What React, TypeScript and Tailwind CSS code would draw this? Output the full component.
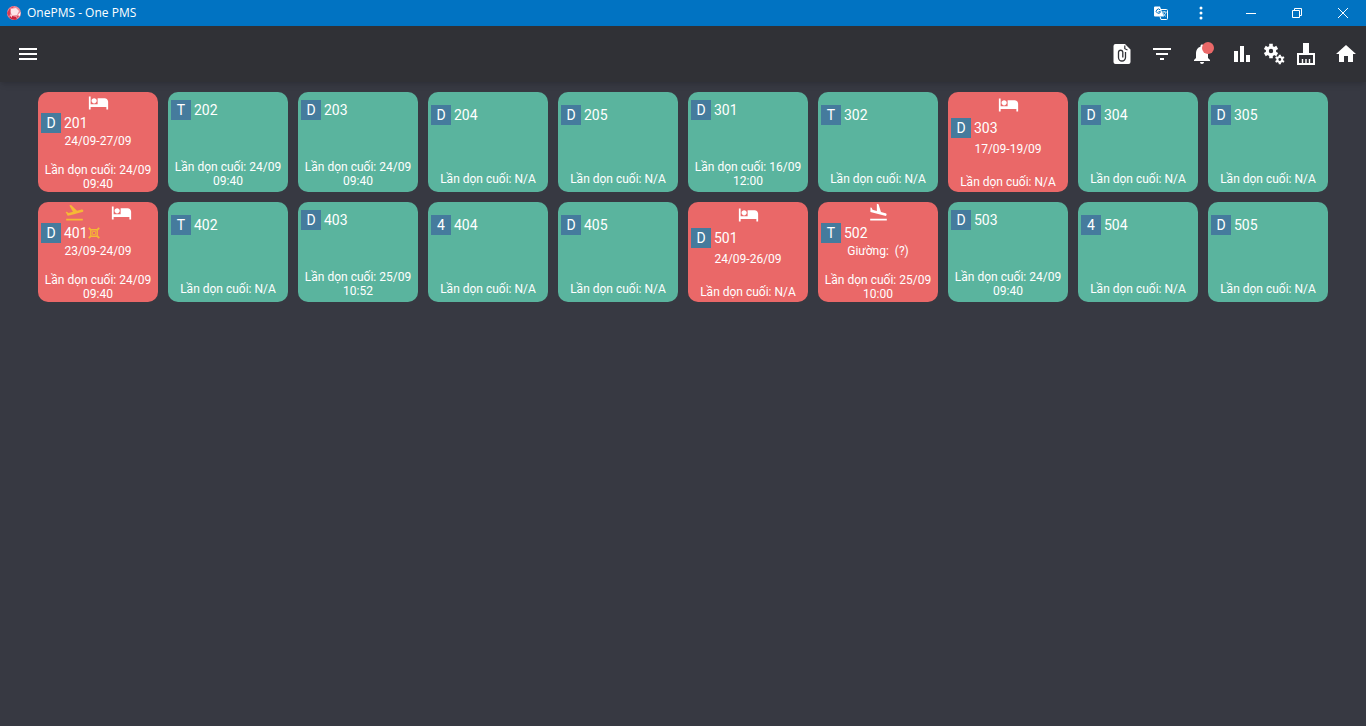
import type { ReactNode } from 'react';
import { MdFilterList, MdFlightLand, MdFlightTakeoff, MdHome, MdHotel, MdMenu, MdNotifications } from 'react-icons/md';

type Status = 'arrival' | 'departure' | 'occupied';

type Room = {
  name: string;
  type: string;
  cleaned?: string;
  status?: Status[];
  note?: string;
  flagged?: boolean;
};

const rooms: Room[] = [
  { name: '201', type: 'D', cleaned: '24/09 09:40', status: ['occupied'], note: '24/09-27/09' },
  { name: '202', type: 'T', cleaned: '24/09 09:40' },
  { name: '203', type: 'D', cleaned: '24/09 09:40' },
  { name: '204', type: 'D' },
  { name: '205', type: 'D' },
  { name: '301', type: 'D', cleaned: '16/09 12:00' },
  { name: '302', type: 'T' },
  { name: '303', type: 'D', status: ['occupied'], note: '17/09-19/09' },
  { name: '304', type: 'D' },
  { name: '305', type: 'D' },
  { name: '401', type: 'D', cleaned: '24/09 09:40', status: ['departure', 'occupied'], note: '23/09-24/09', flagged: true },
  { name: '402', type: 'T' },
  { name: '403', type: 'D', cleaned: '25/09 10:52' },
  { name: '404', type: '4' },
  { name: '405', type: 'D' },
  { name: '501', type: 'D', status: ['occupied'], note: '24/09-26/09' },
  { name: '502', type: 'T', cleaned: '25/09 10:00', status: ['arrival'], note: 'Giường:\u00a0 (?)' },
  { name: '503', type: 'D', cleaned: '24/09 09:40' },
  { name: '504', type: '4' },
  { name: '505', type: 'D' },
];

function Logo() {
  return (
    <svg viewBox="0 0 14 14" className="size-[14px]">
      <circle cx="7" cy="7" r="7" fill="#ee8b9a" />
      <path d="M0 7 L3 2 L4 6 L2 11Z" fill="#d93a52" />
      <path d="M2 11 L5 10 L9 11 L10 13.3 A7 7 0 0 1 2 11Z" fill="#c9203c" />
      <path d="M4 3 L9 2 L12 5 L10 9 L5 9.500 L3.500 6Z" fill="#fde6ea" />
      <path d="M11 9 L13.500 6 L13 10Z" fill="#fff" />
      <path d="M3 2 L7 0 L6 2Z M10 10 L12 10 L10 12Z" fill="#e2475f" />
      <path d="M3 9 L5 9 L5 12Z" fill="#fbd0d7" />
    </svg>
  );
}

function TranslateIcon() {
  return (
    <svg viewBox="0 0 14 14" className="size-[14px]">
      <path d="M1 0.500h5l3.800 10H1a1 1 0 0 1-1-1v-8a1 1 0 0 1 1-1z" fill="#fff" />
      <path d="M6.200 4A2.100 2.100 0 1 0 6.500 5.700H4.500" fill="none" stroke="#0173c2" strokeWidth="1" />
      <path d="M7 3.500h5.500a1 1 0 0 1 1 1v8a1 1 0 0 1-1 1H7L6 10.500" fill="none" stroke="#fff" />
      <path d="M8 6h4.500M10.200 5v1M12 6.200c-.5 1.800-1.500 2.800-2.800 3.800M8.800 7c.7 1.500 1.700 2.500 3 3.300" fill="none" stroke="#fff" strokeWidth=".8" />
    </svg>
  );
}

function AttachmentIcon() {
  return (
    <svg viewBox="0 0 24 24" className="size-6">
      <path d="M5.500 2h9.500L20.500 7.500V20a2 2 0 0 1-2 2h-13a2 2 0 0 1-2-2V4a2 2 0 0 1 2-2z" fill="#fff" />
      <path d="M14.800 3.500v3.200l2.700 1.300" fill="none" stroke="#303136" strokeWidth="1.200" />
      <path d="M15.500 10v5.500a3.500 3.500 0 0 1-7 0V10a2.200 2.200 0 0 1 4.300 0v5.500" fill="none" stroke="#303136" strokeWidth="1.300" />
    </svg>
  );
}

function ChartIcon() {
  return (
    <svg viewBox="0 0 24 24" fill="#fff" className="size-6">
      <path d="M4 9h4v11H4zM10 4h4v16h-4zM16 13h4v7h-4z" />
    </svg>
  );
}

function GearsIcon() {
  return (
    <svg viewBox="0 0 24 24" fill="none" stroke="#fff" className="size-6">
      <circle cx="9" cy="9" r="3.700" strokeWidth="3" />
      <path d="M9 1.800v3M9 13.200v3M2.800 5.400l2.600 1.500M12.600 11.100l2.600 1.500M2.800 12.600l2.600-1.500M12.600 6.900l2.600-1.500" strokeWidth="3.600" />
      <circle cx="17.800" cy="17.500" r="2.400" strokeWidth="2" />
      <path d="M17.800 12.700v2M17.800 20.300v2M13.600 15.100l1.800 1M20.200 18.900l1.800 1M13.600 19.900l1.800-1M20.200 16.100l1.800-1" strokeWidth="2.200" />
    </svg>
  );
}

function BroomIcon() {
  return (
    <svg viewBox="0 0 24 24" className="size-6">
      <path d="M9 1h6v11H9z" fill="#fff" />
      <path d="M4 12h16v10H4z" fill="none" stroke="#fff" strokeWidth="2" />
      <path d="M8.500 17v5M12 17v5M15.500 17v5" fill="none" stroke="#fff" strokeWidth="1.400" />
    </svg>
  );
}

function FlagIcon() {
  return (
    <svg viewBox="0 0 12 12" fill="none" stroke="#f5b935" className="size-3">
      <path d="M2.800 2.800h6.400v6.400h-6.400z" strokeWidth="1.400" />
      <path d="M.8 .8l2 2M11.200 .8l-2 2M.8 11.200l2-2M11.200 11.200l-2-2" strokeWidth="1.800" />
      <path d="M4.500 4.500h3v3h-3z" strokeWidth=".8" />
    </svg>
  );
}

function IconButton({ label, className = 'w-10', children }: { label: string; className?: string; children: ReactNode }) {
  return (
    <button aria-label={label} className={`${className} h-10 flex items-center justify-center text-white`}>
      {children}
    </button>
  );
}

function TitleBar() {
  return (
    <div className="h-[26px] bg-[#0173c2] flex items-center text-white">
      <div className="flex items-center gap-[6px] pl-[7px]">
        <Logo />
        <span className="text-[12px] leading-4 font-['Open_Sans',sans-serif]">OnePMS - One PMS</span>
      </div>
      <div className="ml-auto flex items-center">
        <button aria-label="Translate" className="w-10 flex justify-center"><TranslateIcon /></button>
        <button aria-label="Menu" className="w-10 flex justify-center">
          <svg viewBox="0 0 4 14" fill="#fff" className="w-1 h-[14px]">
            <circle cx="2" cy="2" r="1.500" />
            <circle cx="2" cy="7" r="1.500" />
            <circle cx="2" cy="12" r="1.500" />
          </svg>
        </button>
        <div className="flex pl-[7px]">
          <button aria-label="Minimize" className="w-[46px] flex justify-center">
            <svg viewBox="0 0 10 10" className="size-[10px]" stroke="#fff"><path d="M0 5.500h10" /></svg>
          </button>
          <button aria-label="Restore" className="w-[46px] flex justify-center">
            <svg viewBox="0 0 10 10" className="size-[10px]" fill="none" stroke="#fff">
              <path d="M.5 2.500h7v7h-7zM2.500 2.500v-2h7v7h-2" />
            </svg>
          </button>
          <button aria-label="Close" className="w-[46px] flex justify-center">
            <svg viewBox="0 0 10 10" className="size-[10px]" stroke="#fff"><path d="M0 0l10 10M10 0L0 10" /></svg>
          </button>
        </div>
      </div>
    </div>
  );
}

function Toolbar() {
  return (
    <header className="h-14 bg-[#303136] shadow-md flex items-center justify-between">
      <div className="pl-2">
        <IconButton label="Navigation"><MdMenu className="size-6" /></IconButton>
      </div>
      <div className="flex items-center">
        <IconButton label="Documents"><AttachmentIcon /></IconButton>
        <IconButton label="Filter"><MdFilterList className="size-6" /></IconButton>
        <IconButton label="Notifications">
          <span className="relative">
            <MdNotifications className="size-6" />
            <span className="absolute top-0 right-0 size-3 rounded-full bg-[#ea6868]" />
          </span>
        </IconButton>
        <IconButton label="Reports"><ChartIcon /></IconButton>
        <IconButton label="Settings" className="w-6"><GearsIcon /></IconButton>
        <IconButton label="Housekeeping"><BroomIcon /></IconButton>
        <IconButton label="Home"><MdHome className="size-6" /></IconButton>
      </div>
    </header>
  );
}

function StatusIcon({ status }: { status: Status }) {
  if (status === 'arrival') return <MdFlightLand className="size-[21px]" />;
  if (status === 'departure') return <MdFlightTakeoff className="size-[21px] text-[#f5b935]" />;
  return <MdHotel className="size-[21px]" />;
}

function RoomCard({ room }: { room: Room }) {
  const { name, type, cleaned, status, note, flagged } = room;
  const padding = status
    ? cleaned ? 'pb-px' : 'pt-[2px] pb-[3px]'
    : cleaned ? 'pt-2 pb-1' : 'pt-[13px] pb-[6px]';

  return (
    <div className={`h-[100px] rounded-[10px] flex flex-col justify-between ${status ? 'bg-[#ea6868]' : 'bg-[#5ab49e]'} ${padding}`}>
      <div className={`flex flex-col ${cleaned ? '' : 'gap-[3px]'}`}>
        {status && (
          <div className="flex justify-evenly">
            {status.map((s) => <StatusIcon key={s} status={s} />)}
          </div>
        )}
        <div className="flex items-center gap-[3px] px-[3px]">
          <span className="size-5 bg-[#457b9d] flex items-center justify-center text-[14px] leading-5">{type}</span>
          <span className="flex items-center text-[14px] leading-5">
            {name}
            {flagged && <FlagIcon />}
          </span>
        </div>
        {note && <p className="text-center text-[12px] leading-4">{note}</p>}
      </div>
      <p className="text-center text-[12px] leading-[14px] px-1">{`Lần dọn cuối: ${cleaned ?? 'N/A'}`}</p>
    </div>
  );
}

export default function App() {
  return (
    <div className="min-h-screen bg-[#373942] text-white font-['Roboto',sans-serif]">
      <TitleBar />
      <Toolbar />
      <main className="pt-[10px] px-8 grid grid-cols-[repeat(auto-fill,120px)] justify-center gap-[10px]">
        {rooms.map((room) => <RoomCard key={room.name} room={room} />)}
      </main>
    </div>
  );
}
